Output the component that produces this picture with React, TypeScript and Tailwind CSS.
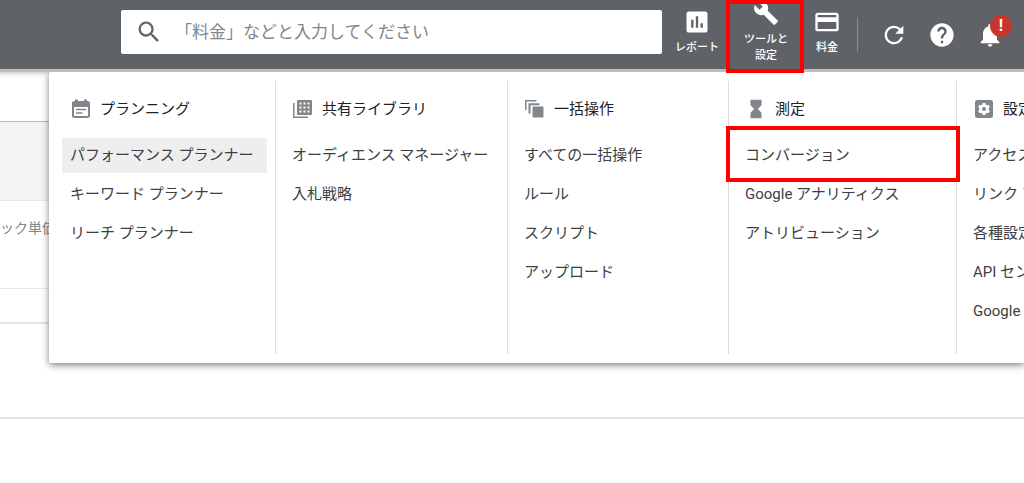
import React from 'react';
import {
  MdAssessment,
  MdBuild,
  MdCreditCard,
  MdHelp,
  MdHourglassFull,
  MdNotifications,
  MdRefresh,
  MdSearch,
} from 'react-icons/md';

const PlanningIcon = () => (
  <svg width="22" height="22" viewBox="0 0 22 22" fill="none" className="shrink-0">
    <rect x="3" y="4" width="16" height="15" rx="1.5" stroke="currentColor" strokeWidth="2" />
    <path d="M2 4h18v5H2zM5 1.5h3v3H5zM14 1.5h3v3h-3z" fill="currentColor" />
    <path d="M6 11.5h10M6 15h6.500" stroke="currentColor" strokeWidth="1.6" />
  </svg>
);

const LibraryIcon = () => (
  <svg width="22" height="22" viewBox="0 0 22 22" fill="none" className="shrink-0">
    <path d="M1.8 5v14.2H16" stroke="currentColor" strokeWidth="1.5" />
    <rect x="5" y="2" width="15" height="15" rx="1" fill="currentColor" />
    <path
      d="M7.5 4.500h2v2h-2zM11.5 4.500h2v2h-2zM15.5 4.500h2v2h-2zM7.5 8.500h2v2h-2zM11.5 8.500h2v2h-2zM15.5 8.500h2v2h-2zM7.5 12.500h2v2h-2zM11.5 12.500h2v2h-2zM15.5 12.500h2v2h-2z"
      fill="#fff"
    />
  </svg>
);

const BulkIcon = () => (
  <svg width="22" height="22" viewBox="0 0 22 22" fill="none" className="shrink-0">
    <path d="M1.8 12V2.8h10.700" stroke="currentColor" strokeWidth="1.5" />
    <path d="M5.5 15.500V6.200h10" stroke="currentColor" strokeWidth="2" />
    <rect x="8.5" y="8.5" width="11" height="11" rx="1" fill="currentColor" />
  </svg>
);

const SettingsIcon = () => (
  <svg width="22" height="22" viewBox="0 0 22 22" fill="none" className="shrink-0">
    <rect x="2" y="2" width="18" height="18" rx="2.5" fill="currentColor" />
    <circle cx="11" cy="11" r="4.8" fill="#fff" />
    <path d="M11 5v12M5.8 8l10.400 6M5.8 14l10.400-6" stroke="#fff" strokeWidth="3" />
    <circle cx="11" cy="11" r="2" fill="currentColor" />
  </svg>
);

interface MenuColumn {
  title: string;
  icon: React.ReactNode;
  width: string;
  items: string[];
}

const columns: MenuColumn[] = [
  {
    title: 'プランニング',
    icon: <PlanningIcon />,
    width: 'w-[222px]',
    items: ['パフォーマンス プランナー', 'キーワード プランナー', 'リーチ プランナー'],
  },
  {
    title: '共有ライブラリ',
    icon: <LibraryIcon />,
    width: 'w-[232px]',
    items: ['オーディエンス マネージャー', '入札戦略'],
  },
  {
    title: '一括操作',
    icon: <BulkIcon />,
    width: 'w-[221px]',
    items: ['すべての一括操作', 'ルール', 'スクリプト', 'アップロード'],
  },
  {
    title: '測定',
    icon: <MdHourglassFull size={22} className="shrink-0" />,
    width: 'w-[228px]',
    items: ['コンバージョン', 'Google アナリティクス', 'アトリビューション'],
  },
  {
    title: '設定',
    icon: <SettingsIcon />,
    width: 'w-[232px]',
    items: ['アクセスとセキュリティ', 'リンク アカウント', '各種設定', 'API センター', 'Google Merchant Center'],
  },
];

const ToolButton = ({ icon, className, children }: { icon: React.ReactNode; className: string; children: React.ReactNode }) => (
  <button type="button" className={`relative flex h-16 flex-col items-center justify-center text-[11px] font-medium leading-4 ${className}`}>
    {icon}
    <span>{children}</span>
  </button>
);

const Header = () => (
  <header className="relative z-20 flex h-[69px] items-start bg-[#5f6368] pl-[121px] pr-[10px] text-white shadow-[0_3px_0_#bdbdbd]">
    <label className="mt-[10px] flex h-11 min-w-0 flex-1 items-center rounded-xs bg-white pl-[14px]">
      <MdSearch size={28} className="shrink-0 text-[#5f6368]" />
      <input
        type="search"
        aria-label="検索"
        placeholder="「料金」などと入力してください"
        className="ml-3 min-w-0 flex-1 bg-transparent pt-0.5 text-[17px] text-[#3c4043] outline-none placeholder:text-[#80868b]"
      />
    </label>
    <ToolButton icon={<MdAssessment size={28} />} className="w-[70px] gap-1">
      レポート
    </ToolButton>
    <ToolButton icon={<MdBuild size={28} />} className="w-[68px] gap-1.5">
      ツールと
      <br />
      設定
      <span className="pointer-events-none absolute -left-[6px] -right-1 top-0 h-[73px] border-[4px] border-[#ff0000]" />
    </ToolButton>
    <ToolButton icon={<MdCreditCard size={28} />} className="w-[54px] gap-1">
      料金
    </ToolButton>
    <div className="ml-[3px] mr-3 mt-[17px] h-[35px] w-px bg-[#8a8d91]" />
    <div className="flex h-[69px] items-center">
      <button type="button" aria-label="更新" className="flex h-12 w-12 items-center justify-center">
        <MdRefresh size={28} />
      </button>
      <button type="button" aria-label="ヘルプ" className="flex h-12 w-12 items-center justify-center">
        <MdHelp size={28} />
      </button>
      <button type="button" aria-label="通知" className="relative flex h-12 w-12 items-center justify-center">
        <MdNotifications size={28} />
        <span className="absolute right-[2px] top-[4px] flex h-[22px] w-[22px] items-center justify-center rounded-full bg-[#c5372c] text-base font-bold leading-none">
          !
        </span>
      </button>
    </div>
  </header>
);

const ToolsMenu = () => (
  <nav className="absolute left-[49px] right-0 top-[72px] z-10 -ml-3 overflow-hidden pb-3 pl-3">
    <div className="flex h-[291px] rounded-l-xs bg-white py-[9px] pl-[5px] shadow-[0_2px_7px_rgba(0,0,0,0.5)]">
      {columns.map((column, c) => (
        <section key={column.title} className={`shrink-0 border-r border-[#dadce0] px-2 ${column.width}`}>
          <h2 className="mb-[14px] mt-[13px] flex h-[30px] items-center gap-2 whitespace-nowrap pl-2 text-[15px] font-normal text-[#202124]">
            <span className="text-[#80868b]">{column.icon}</span>
            {column.title}
          </h2>
          <ul className="flex flex-col gap-1">
            {column.items.map((item, i) => (
              <li key={item} className="relative">
                <a
                  href="#"
                  className={`flex h-[35px] items-center whitespace-nowrap px-2 pb-px text-[15px] text-[#3c4043] ${c === 0 && i === 0 ? 'bg-[#eeeeee]' : ''}`}
                >
                  {item}
                </a>
                {item === 'コンバージョン' && (
                  <span className="pointer-events-none absolute -left-[11px] -right-3 -top-3 h-[56px] border-[4px] border-[#ff0000]" />
                )}
              </li>
            ))}
          </ul>
        </section>
      ))}
    </div>
  </nav>
);

const App: React.FC = () => {
  return (
    <div className="relative min-h-screen overflow-hidden bg-white font-['Roboto','Noto_Sans_CJK_JP',sans-serif]">
      <Header />
      <main>
        <div className="h-[53px] border-b border-[#b8b8b8] shadow-[inset_0_9px_5px_-5px_rgba(0,0,0,0.25)]" />
        <div className="h-[79px] border-b border-[#e8eaed] bg-[#f1f3f4]" />
        <div className="h-[88px] border-b border-[#e8eaed] pt-[17px] text-sm text-[#80868b]">ック単価</div>
        <div className="h-[35px] border-b-2 border-[#e3e4e6]" />
        <div className="h-[95px] border-b-2 border-[#e3e4e6]" />
      </main>
      <ToolsMenu />
    </div>
  );
};

export default App;
